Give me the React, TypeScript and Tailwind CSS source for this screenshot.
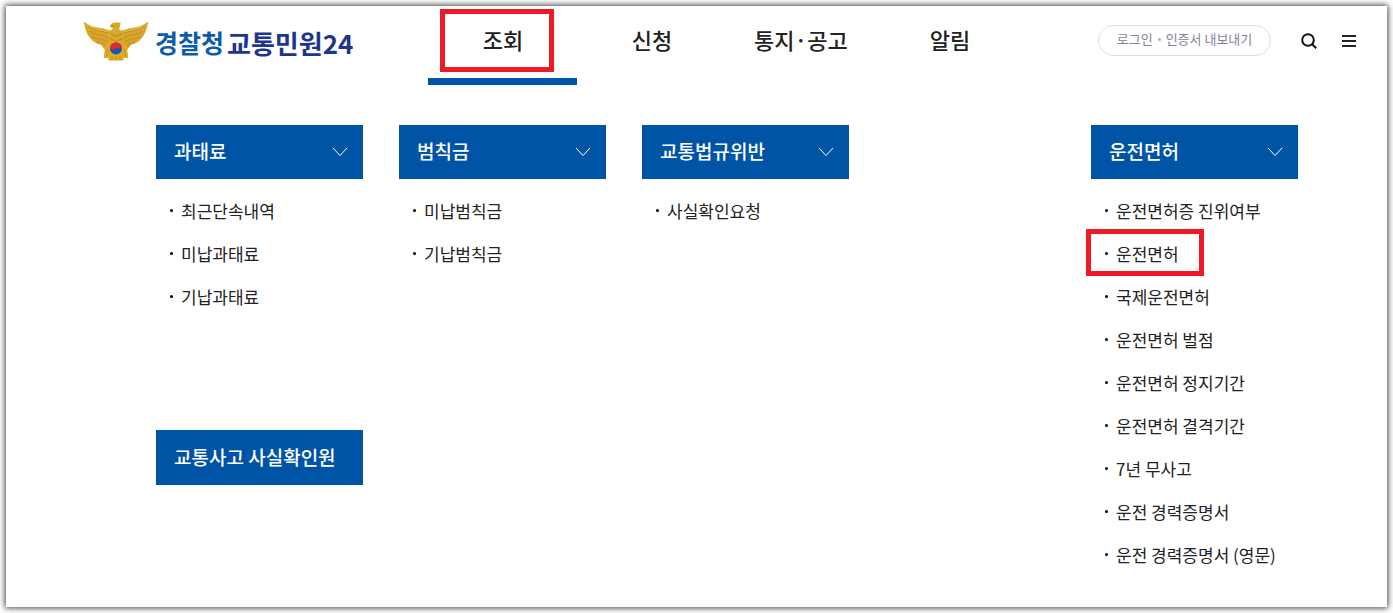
type MenuGroup = {
  title: string
  items: string[]
  marked?: string
}

const tabs = ['조회', '신청', '통지·공고', '알림']

const groups: MenuGroup[] = [
  { title: '과태료', items: ['최근단속내역', '미납과태료', '기납과태료'] },
  { title: '범칙금', items: ['미납범칙금', '기납범칙금'] },
  { title: '교통법규위반', items: ['사실확인요청'] },
]

const licenseGroup: MenuGroup = {
  title: '운전면허',
  items: [
    '운전면허증 진위여부',
    '운전면허',
    '국제운전면허',
    '운전면허 벌점',
    '운전면허 정지기간',
    '운전면허 결격기간',
    '7년 무사고',
    '운전 경력증명서',
    '운전 경력증명서 (영문)',
  ],
  marked: '운전면허',
}

function PoliceEmblem() {
  return (
    <svg viewBox="20 30 198 122" className="h-[41px] w-[66px]" aria-hidden="true">
      {/* Wings */}
      <path
        d="M22 33 C38 48 58 52 78 54 L104 62 L134 62 L160 54 C180 52 200 48 216 33 C212 56 206 72 196 84 C188 95 176 101 164 104 L150 122 L88 122 L74 104 C62 101 50 95 42 84 C32 72 26 56 22 33Z"
        fill="#d8a42c"
      />
      <path
        d="M34 49 C54 62 75 61 95 69 M39 64 C58 74 76 73 94 82 M47 79 C62 87 78 86 94 95 M60 94 C72 99 82 99 92 106 M204 49 C184 62 163 61 143 69 M199 64 C180 74 162 73 144 82 M191 79 C176 87 160 86 144 95 M178 94 C166 99 156 99 146 106"
        fill="none"
        stroke="#b5831f"
        strokeWidth="2"
      />
      <path
        d="M29 44 C50 59 75 58 99 65 M209 44 C188 59 163 58 139 65"
        fill="none"
        stroke="#e8bd42"
        strokeWidth="3"
      />
      {/* Tail and body */}
      <path d="M88 98 L82 145 L94 142 L98 151 L140 151 L144 142 L156 145 L150 98Z" fill="#e0ab27" />
      <path d="M94 116 L90 140 M144 116 L148 140 M107 138 V150 M119 139 V150 M131 138 V150" stroke="#b5831f" strokeWidth="2" />
      <path d="M98 66 L110 55 L101 49 C102 40 110 36 120 37 H133 L131 50 L128 57 L142 68 L146 94 L119 111 L92 94Z" fill="#d9a92d" />
      <path d="M101 49 L110 47 L115 49 M102 70 L119 79 L137 70 M99 84 L119 94 L140 84" fill="none" stroke="#a67a1e" strokeWidth="2" />
      {/* Taegeuk */}
      <circle cx="119" cy="115" r="18" fill="#1a56b0" />
      <path d="M101 113 A18 18 0 0 1 137 117 A13 13 0 0 0 119 116 A13 13 0 0 1 101 113Z" fill="#e32636" />
    </svg>
  )
}

function ChevronDown() {
  return (
    <svg viewBox="0 0 16 10" className="h-[10px] w-4" fill="none" stroke="#fff" strokeWidth="1" aria-hidden="true">
      <path d="M1 1 L8 8.5 L15 1" />
    </svg>
  )
}

function MenuColumn({ title, items, marked }: MenuGroup) {
  return (
    <section>
      <button type="button" className="flex h-[54px] w-full items-center justify-between bg-[#0054a6] pr-[15px] pb-px pl-[18px] text-[19px] font-medium text-white">
        {title}
        <ChevronDown />
      </button>
      <ul className="pt-[10px] pl-[14px]">
        {items.map((item) => (
          <li key={item} className="relative flex h-[43px] items-center">
            <span className="mr-2 size-[3px] rounded-full bg-black" />
            <a href="#" className="text-[17px] font-normal whitespace-nowrap text-[#222]">
              {item}
            </a>
            {item === marked && (
              <span className="pointer-events-none absolute -top-[3px] -left-[19px] h-[47px] w-[118px] border-5 border-[#ed1c24]" />
            )}
          </li>
        ))}
      </ul>
    </section>
  )
}

export default function App() {
  return (
    <div className="flex min-h-screen bg-white p-[6px] font-['Noto_Sans_CJK_KR',sans-serif]">
      <div className="flex-1 bg-white shadow-[0_0_6px_1px_rgba(0,0,0,0.75)]">
        {/* Header */}
        <header className="flex h-[79px] items-start pr-[31px] pl-[77px]">
          <a href="#" className="mt-[14px] flex shrink-0 items-start">
            <PoliceEmblem />
            <span className="ml-[6px] flex gap-[3px] pt-[2px] leading-[41px] font-bold whitespace-nowrap">
              <span className="text-[25px] text-[#0b5cab]">경찰청</span>
              <span className="text-[26px] text-[#1c3690]">교통민원24</span>
            </span>
          </a>

          <nav className="ml-[75px] grid w-[596px] grid-cols-4">
            {tabs.map((tab, i) => (
              <a
                key={tab}
                href="#"
                className={`relative flex h-[79px] justify-center border-b-7 pt-[17px] text-[22px] leading-8 font-medium text-[#222] ${
                  i === 0 ? 'border-[#0054a6]' : 'border-transparent'
                }`}
              >
                {tab}
                {i === 0 && (
                  <span className="pointer-events-none absolute top-[3px] left-3 h-[63px] w-[114px] border-5 border-[#ed1c24]" />
                )}
              </a>
            ))}
          </nav>

          <div className="mt-[19px] ml-auto flex shrink-0 items-center">
            <div className="flex h-[31px] w-[173px] items-center justify-center rounded-full border border-[#d9dcea] pb-[3px] text-[13px] whitespace-nowrap text-[#7f8594]">
              <a href="#">로그인</a>
              <span className="mx-[5px] size-[3px] rounded-full bg-[#a9aebb]" />
              <a href="#">인증서 내보내기</a>
            </div>
            <button type="button" aria-label="검색" className="ml-[30px]">
              <svg viewBox="0 0 16 16" className="size-4" fill="none" stroke="#111" strokeWidth="2" aria-hidden="true">
                <circle cx="7" cy="7" r="5.8" />
                <path d="M11 11 L15.2 15.2" />
              </svg>
            </button>
            <button type="button" aria-label="전체메뉴" className="ml-[25px]">
              <svg viewBox="0 0 14 12" className="h-3 w-[14px]" fill="#222" aria-hidden="true">
                <path d="M0 0h14v2H0zM0 5h14v2H0zM0 10h14v2H0z" />
              </svg>
            </button>
          </div>
        </header>

        {/* Mega menu */}
        <main className="mr-[89px] ml-[150px] flex items-start justify-between pt-10">
          <div className="grid grid-cols-[repeat(3,207px)] gap-x-9">
            {groups.map((group) => (
              <MenuColumn key={group.title} {...group} />
            ))}
            <a href="#" className="mt-28 flex h-[55px] items-center bg-[#0054a6] pl-[18px] text-[19px] font-medium whitespace-nowrap text-white">
              교통사고 사실확인원
            </a>
          </div>
          <div className="w-[207px]">
            <MenuColumn {...licenseGroup} />
          </div>
        </main>
      </div>
    </div>
  )
}
